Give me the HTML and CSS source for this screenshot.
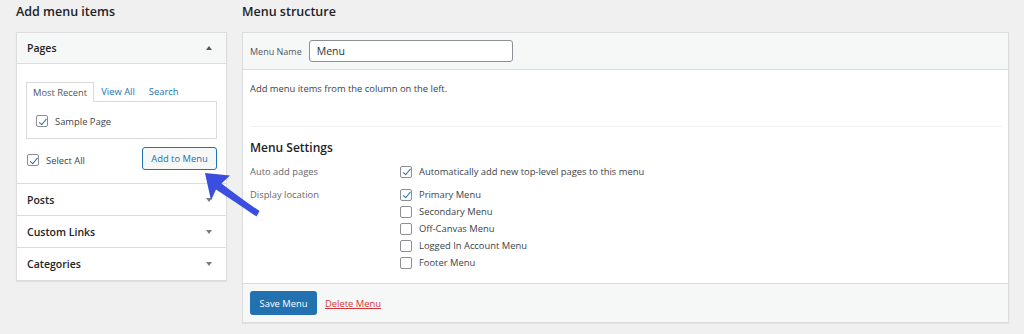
FILE: index.html
```html
<!DOCTYPE html>
<html>
<head>
<meta charset="utf-8">
<link rel="stylesheet" href="styles.css">
</head>
<body>
<div class="page">
  <div class="col-left">
    <h2 class="col-title">Add menu items</h2>
    <div class="acc">
      <div class="acc-head open">
        <span>Pages</span>
        <span class="tri up"></span>
      </div>
      <div class="acc-body">
        <div class="tabs">
          <span class="tab active">Most Recent</span>
          <span class="tab">View All</span>
          <span class="tab">Search</span>
        </div>
        <div class="tab-panel">
          <label class="cb-row"><span class="cb checked"></span>Sample Page</label>
        </div>
        <div class="actions">
          <label class="cb-row"><span class="cb checked"></span>Select All</label>
          <span class="btn-sec">Add to Menu</span>
        </div>
      </div>
      <div class="acc-head"><span>Posts</span><span class="tri down"></span></div>
      <div class="acc-head"><span>Custom Links</span><span class="tri down"></span></div>
      <div class="acc-head last"><span>Categories</span><span class="tri down"></span></div>
    </div>
  </div>
  <div class="col-right">
    <h2 class="col-title">Menu structure</h2>
    <div class="mbox">
      <div class="mbox-head">
        <span class="mlabel">Menu Name</span>
        <span class="minput">Menu</span>
      </div>
      <div class="mbox-body">
        <p class="hint">Add menu items from the column on the left.</p>
        <div class="settings">
          <h3 class="set-title">Menu Settings</h3>
          <div class="set-row">
            <span class="set-label">Auto add pages</span>
            <div class="set-opts">
              <label class="cb-row"><span class="cb checked"></span>Automatically add new top-level pages to this menu</label>
            </div>
          </div>
          <div class="set-row loc">
            <span class="set-label">Display location</span>
            <div class="set-opts">
              <label class="cb-row"><span class="cb checked"></span>Primary Menu</label>
              <label class="cb-row"><span class="cb"></span>Secondary Menu</label>
              <label class="cb-row"><span class="cb"></span>Off-Canvas Menu</label>
              <label class="cb-row"><span class="cb"></span>Logged In Account Menu</label>
              <label class="cb-row"><span class="cb"></span>Footer Menu</label>
            </div>
          </div>
        </div>
      </div>
      <div class="mbox-foot">
        <span class="btn-pri">Save Menu</span>
        <span class="del">Delete Menu</span>
      </div>
    </div>
  </div>
  <svg class="arrow" width="70" height="60" viewBox="200 168 70 60">
    <path d="M205 173 L230 175.5 L221.5 183.5 C234 193 246 202 259.5 211 L256.5 216.5 C243 207.5 230 198.5 216 189.5 L211 200.5 Z" fill="#3a4ee0"/>
  </svg>
</div>
</body>
</html>
```
FILE: styles.css
```css
* { box-sizing: border-box; }
html, body { margin: 0; padding: 0; }
body {
  background: #f0f0f1;
  font-family: "Open Sans", "Noto Sans", sans-serif;
  font-size: 9.4px;
  color: #3c434a;
  width: 1024px;
  height: 334px;
  overflow: hidden;
}
.page {
  position: relative;
  display: flex;
  gap: 15px;
  padding: 0 15px 0 16px;
}
.col-left { width: 211px; flex: none; }
.col-right { flex: 1; }
.col-title {
  margin: 0;
  height: 32px;
  padding-top: 3px;
  font-size: 12.5px;
  font-weight: 600;
  color: #1d2327;
  line-height: 18px;
}
.acc {
  background: #fff;
  border: 1px solid #dcdcde;
  box-shadow: 0 1px 1px rgba(0,0,0,0.06);
}
.acc-head {
  height: 32px;
  display: flex;
  align-items: center;
  justify-content: space-between;
  padding: 0 14px 0 10px;
  font-size: 10.5px;
  font-weight: 600;
  color: #1d2327;
  border-bottom: 1px solid #dcdcde;
  background: #fff;
}
.acc-head.open { background: #f6f7f7; height: 31px; }
.acc-head.last { border-bottom: none; }
.tri {
  width: 0; height: 0;
  border-left: 3.5px solid transparent;
  border-right: 3.5px solid transparent;
}
.tri.up { border-bottom: 4px solid #50575e; }
.tri.down { border-top: 4px solid #787c82; }
.acc-body {
  padding: 18px 9px 13px 9px;
  border-bottom: 1px solid #dcdcde;
}
.tabs { display: flex; height: 19px; align-items: stretch; }
.tab {
  padding: 0 7px;
  color: #2271b1;
  line-height: 20px;
  white-space: nowrap;
}
.tab.active {
  color: #50575e;
  border: 1px solid #dcdcde;
  border-bottom: none;
  background: #fff;
  margin-bottom: -1px;
  padding: 0 6px;
  position: relative;
  z-index: 1;
}
.tab-panel {
  border: 1px solid #dcdcde;
  height: 38px;
  padding: 0 9px;
  display: flex;
  align-items: center;
  padding-top: 2px;
}
.cb-row {
  display: flex;
  align-items: center;
  gap: 7px;
  color: #3c434a;
  white-space: nowrap;
}
.cb {
  width: 12px; height: 12px;
  border: 1px solid #8c8f94;
  border-radius: 2px;
  background: #fff;
  flex: none;
  position: relative;
}
.cb.checked::after {
  content: "";
  position: absolute;
  left: 3.5px; top: 0.5px;
  width: 3px; height: 6.5px;
  border: solid #2271b1;
  border-width: 0 1.8px 1.8px 0;
  transform: rotate(40deg);
}
.actions {
  display: flex;
  justify-content: space-between;
  align-items: center;
  margin-top: 8px;
  padding-left: 1px;
}
.actions .cb-row { margin-top: 3px; }
.btn-sec {
  width: 75px;
  height: 23px;
  border: 1px solid #2271b1;
  border-radius: 3px;
  background: #f6f7f7;
  color: #2271b1;
  display: flex;
  align-items: center;
  justify-content: center;
}
.mbox {
  background: #fff;
  border: 1px solid #dcdcde;
  box-shadow: 0 1px 1px rgba(0,0,0,0.06);
}
.mbox-head {
  height: 37px;
  background: #f6f7f7;
  border-bottom: 1px solid #dcdcde;
  display: flex;
  align-items: center;
  padding: 0 7px;
  gap: 7px;
}
.mlabel { font-size: 9px; color: #50575e; }
.minput {
  width: 204px;
  height: 22px;
  border: 1px solid #8c8f94;
  border-radius: 3px;
  background: #fff;
  display: flex;
  align-items: center;
  padding: 0 7px;
  font-size: 10.5px;
  color: #2c3338;
}
.mbox-body {
  padding: 0 6px 0 7px;
}
.hint {
  margin: 0;
  padding-top: 13px;
  height: 57px;
  line-height: 12px;
  color: #3c434a;
  border-bottom: 1px solid #f0f0f1;
}
.settings { padding: 13px 0 12px; }
.set-title {
  margin: 0 0 7px;
  font-size: 12px;
  font-weight: 600;
  color: #1d2327;
  line-height: 16px;
}
.set-row { display: flex; }
.set-row.loc { margin-top: 6px; }
.set-label { width: 150px; color: #646970; line-height: 17px; flex: none; }
.set-opts { display: flex; flex-direction: column; }
.set-opts .cb-row { height: 17px; }
.mbox-foot {
  height: 39px;
  background: #f6f7f7;
  border-top: 1px solid #dcdcde;
  display: flex;
  align-items: center;
  padding: 0 7px;
  gap: 8px;
}
.btn-pri {
  width: 67px;
  height: 24px;
  background: #2271b1;
  border-radius: 3px;
  color: #fff;
  display: flex;
  align-items: center;
  justify-content: center;
}
.del {
  color: #d63638;
  text-decoration: underline;
}
.arrow {
  position: absolute;
  left: 200px;
  top: 168px;
}
```
